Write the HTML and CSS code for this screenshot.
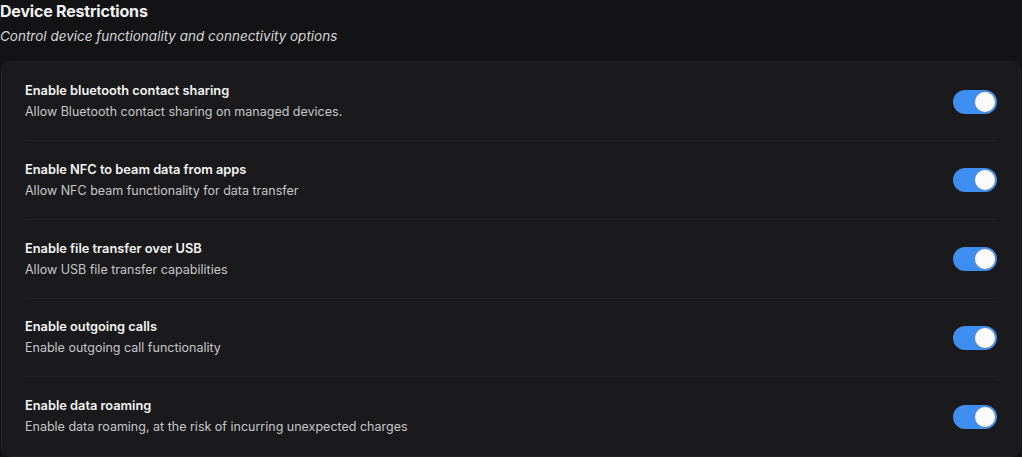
FILE: index.html
```html
<!DOCTYPE html>
<html lang="en">
<head>
  <meta charset="UTF-8">
  <title>Device Restrictions</title>
  <link rel="stylesheet" href="styles.css">
</head>
<body>
  <section class="panel">
    <header class="panel-head">
      <h2>Device Restrictions</h2>
      <p>Control device functionality and connectivity options</p>
    </header>
    <div class="card">
      <div class="row">
        <div class="row-text">
          <h3>Enable bluetooth contact sharing</h3>
          <p>Allow Bluetooth contact sharing on managed devices.</p>
        </div>
        <label class="switch"><input type="checkbox" checked><span class="track"></span></label>
      </div>
      <div class="row">
        <div class="row-text">
          <h3>Enable NFC to beam data from apps</h3>
          <p>Allow NFC beam functionality for data transfer</p>
        </div>
        <label class="switch"><input type="checkbox" checked><span class="track"></span></label>
      </div>
      <div class="row">
        <div class="row-text">
          <h3>Enable file transfer over USB</h3>
          <p>Allow USB file transfer capabilities</p>
        </div>
        <label class="switch"><input type="checkbox" checked><span class="track"></span></label>
      </div>
      <div class="row">
        <div class="row-text">
          <h3>Enable outgoing calls</h3>
          <p>Enable outgoing call functionality</p>
        </div>
        <label class="switch"><input type="checkbox" checked><span class="track"></span></label>
      </div>
      <div class="row">
        <div class="row-text">
          <h3>Enable data roaming</h3>
          <p>Enable data roaming, at the risk of incurring unexpected charges</p>
        </div>
        <label class="switch"><input type="checkbox" checked><span class="track"></span></label>
      </div>
    </div>
  </section>
</body>
</html>
```

FILE: styles.css
```css
html, body {
  margin: 0;
  background: #131315;
}

body {
  font-family: Inter, "Noto Sans", sans-serif;
  color: #f2f2f3;
}

.panel-head h2 {
  margin: 0;
  font-size: 16px;
  line-height: 22px;
  font-weight: 700;
  letter-spacing: -0.2px;
}
.panel-head p {
  margin: 2px 0 0;
  font-size: 13.5px;
  line-height: 24px;
  font-style: italic;
  color: #d6d6d8;
}

.card {
  margin: 13px 1px 1px 1px;
  background: #1a1a1c;
  border: 1px solid #222225;
  border-radius: 10px;
  padding: 0 23px;
}

.row {
  display: flex;
  align-items: center;
  justify-content: space-between;
  padding: 18.75px 0 18px;
  border-bottom: 1px solid #232326;
}
.row:first-child {
  padding-top: 19px;
}
.row:last-child {
  border-bottom: none;
  padding-bottom: 19px;
}

.row-text h3 {
  margin: 0;
  font-size: 12.8px;
  line-height: 20px;
  font-weight: 600;
  color: #f4f4f5;
}
.row-text p {
  margin: 1px 0 0;
  font-size: 12.5px;
  line-height: 20px;
  color: #c6c6ca;
}

.switch {
  position: relative;
  display: block;
  width: 44px;
  height: 24px;
  flex-shrink: 0;
}
.switch input {
  display: none;
}
.switch .track {
  position: absolute;
  inset: 0;
  background: #3d8ef0;
  border-radius: 12px;
}
.switch .track::after {
  content: "";
  position: absolute;
  top: 2px;
  right: 2px;
  width: 20px;
  height: 20px;
  border-radius: 50%;
  background: #fafafa;
  box-shadow: 0 0 0 1px rgba(120, 140, 170, 0.5);
}
```
